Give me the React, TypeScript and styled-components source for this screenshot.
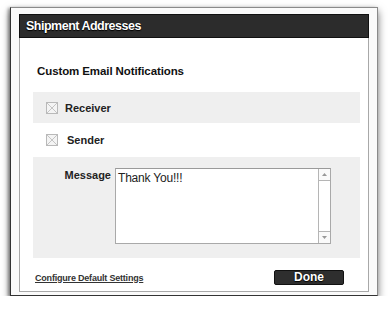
import styled, { createGlobalStyle } from "styled-components";

const GlobalStyle = createGlobalStyle`
  html, body {
    margin: 0;
    padding: 0;
    background: #ffffff;
  }
  body {
    font-family: "Liberation Sans", Arial, sans-serif;
  }
`;

const Frame = styled.div`
  box-sizing: border-box;
  width: 368px;
  height: 289px;
  margin: 7px 0 0 10px;
  padding: 6px 8px 3px 8px;
  background: #fafafa;
  border: 1px solid #8a8a8a;
  border-left-color: #333;
  border-bottom-color: #333;
  box-shadow: 0 4px 8px rgba(0, 0, 0, 0.55), -2px 1px 3px rgba(0, 0, 0, 0.35);
  display: flex;
`;

const Window = styled.div`
  flex: 1;
  display: flex;
  flex-direction: column;
  background: #ffffff;
  border: 1px solid #a8a8a8;
  border-top: none;
`;

const Header = styled.div`
  box-sizing: border-box;
  height: 24px;
  margin: 0 -1px;
  padding: 0 6px;
  display: flex;
  align-items: center;
  background: #2c2c2c;
  border: 1px solid #111;
  color: #fff;
  font-size: 12.5px;
  font-weight: bold;
  letter-spacing: -0.5px;
  text-shadow: 0 1px 1px #000, 0 0 1px #000;
`;

const Body = styled.div`
  flex: 1;
  display: flex;
  flex-direction: column;
  padding: 26px 8px 0 13px;
`;

const Heading = styled.h2`
  margin: 0 0 14px 4px;
  font-size: 11.5px;
  line-height: 14px;
  font-weight: bold;
  letter-spacing: -0.1px;
  color: #111;
`;

const OptionRow = styled.div<{ $shaded?: boolean; $height: number }>`
  height: ${(p) => p.$height}px;
  display: flex;
  align-items: center;
  gap: ${(p) => (p.$shaded ? 7 : 9)}px;
  padding-left: 13px;
  background: ${(p) => (p.$shaded ? "#efefef" : "transparent")};
  font-size: 11px;
  font-weight: bold;
  color: #222;
`;

const Check = styled.span`
  box-sizing: border-box;
  width: 12px;
  height: 12px;
  border: 1px solid #b9b9b9;
  background: #f4f4f4;
  display: block;
  svg {
    display: block;
  }
`;

const MessageSection = styled.div`
  height: 101px;
  box-sizing: border-box;
  padding-top: 11px;
  display: flex;
  align-items: flex-start;
  gap: 4px;
  background: #efefef;
`;

const FieldLabel = styled.span`
  width: 78px;
  text-align: right;
  font-size: 11px;
  font-weight: bold;
  color: #222;
  line-height: 12px;
  padding-top: 1px;
`;

const TextBox = styled.div`
  box-sizing: border-box;
  width: 216px;
  height: 76px;
  display: flex;
  background: #fff;
  border: 1px solid #a9a9a9;
  border-top-color: #9a9a9a;
`;

const TextContent = styled.div`
  flex: 1;
  padding: 2px 2px;
  font-size: 12px;
  line-height: 14px;
  letter-spacing: -0.2px;
  color: #222;
`;

const Scrollbar = styled.div`
  width: 11px;
  display: flex;
  flex-direction: column;
  border-left: 1px solid #b5b5b5;
`;

const ScrollButton = styled.div<{ $down?: boolean }>`
  height: 11px;
  display: flex;
  align-items: center;
  justify-content: center;
  background: #fafafa;
  ${(p) => (p.$down ? "border-top: 1px solid #b5b5b5;" : "border-bottom: 1px solid #b5b5b5;")}
`;

const Track = styled.div`
  flex: 1;
  background: #fff;
`;

const Footer = styled.div`
  display: flex;
  align-items: center;
  justify-content: space-between;
  padding: 12px 16px 0 2px;
`;

const SettingsLink = styled.a`
  font-size: 9px;
  font-weight: bold;
  letter-spacing: -0.2px;
  color: #333;
  text-decoration: underline;
  cursor: pointer;
`;

const DoneButton = styled.button`
  box-sizing: border-box;
  width: 70px;
  height: 15px;
  padding: 0;
  background: #2e2e2e;
  border: 1px solid #111;
  border-radius: 2px;
  color: #fff;
  font-family: "Liberation Sans", Arial, sans-serif;
  font-size: 12px;
  font-weight: bold;
  line-height: 13px;
  text-shadow: 0 1px 1px #000, 0 0 1px #000;
`;

const CrossBox = () => (
  <Check>
    <svg width="10" height="10" viewBox="0 0 10 10">
      <path d="M0 0L10 10M10 0L0 10" stroke="#c4c4c4" strokeWidth="1" />
    </svg>
  </Check>
);

const Arrow = ({ down }: { down?: boolean }) => (
  <svg width="5" height="3" viewBox="0 0 5 3">
    <path d={down ? "M0 0H5L2.5 3Z" : "M0 3H5L2.5 0Z"} fill="#999" />
  </svg>
);

const App = () => {
  return (
    <>
      <GlobalStyle />
      <Frame>
        <Window>
          <Header>Shipment Addresses</Header>
          <Body>
            <Heading>Custom Email Notifications</Heading>
            <OptionRow $shaded $height={31}>
              <CrossBox />
              Receiver
            </OptionRow>
            <OptionRow $height={34}>
              <CrossBox />
              Sender
            </OptionRow>
            <MessageSection>
              <FieldLabel>Message</FieldLabel>
              <TextBox>
                <TextContent>Thank You!!!</TextContent>
                <Scrollbar>
                  <ScrollButton>
                    <Arrow />
                  </ScrollButton>
                  <Track />
                  <ScrollButton $down>
                    <Arrow down />
                  </ScrollButton>
                </Scrollbar>
              </TextBox>
            </MessageSection>
            <Footer>
              <SettingsLink>Configure Default Settings</SettingsLink>
              <DoneButton>Done</DoneButton>
            </Footer>
          </Body>
        </Window>
      </Frame>
    </>
  );
};

export default App;
